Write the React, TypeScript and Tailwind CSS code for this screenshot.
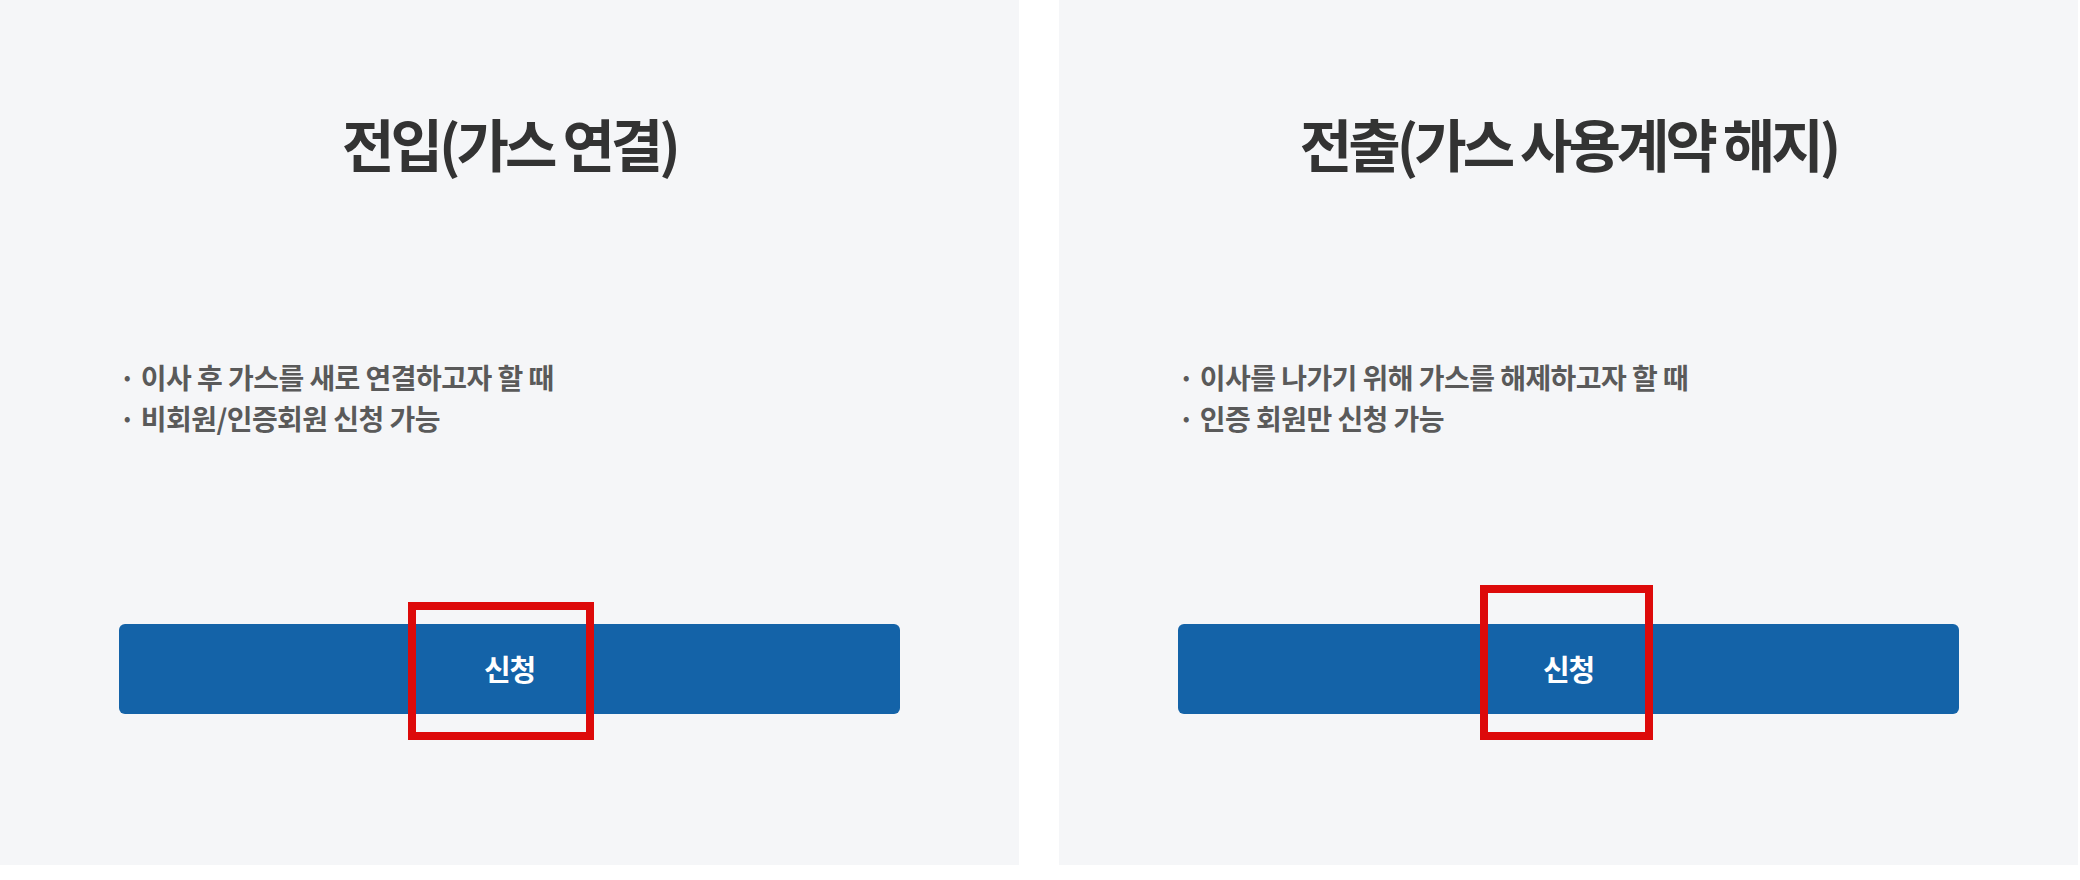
import React from "react";

interface Mark {
  left: number;
  top: number;
  width: number;
  height: number;
}

interface CardProps {
  title: string;
  lines: string[];
  mark: Mark;
}

function Card({ title, lines, mark }: CardProps) {
  return (
    <div className="w-[1019px] h-[865px] bg-[#f5f6f8] flex flex-col pt-[114px] px-[119px]">
      {/* Title */}
      <h2 className="text-center text-[57px] leading-[57px] font-bold tracking-[-0.07em] text-[#333333]">
        {title}
      </h2>

      {/* Description */}
      <ul className="mt-[186px] text-[28px] leading-[41px] font-bold tracking-[-0.02em] text-[#5a5a5a]">
        {lines.map((line) => (
          <li key={line}>· {line}</li>
        ))}
      </ul>

      {/* Apply button */}
      <div className="relative mt-[185px]">
        <button className="w-full h-[90px] rounded-[6px] bg-[#1463a8] text-white text-[29px] font-bold tracking-[-0.04em]">
          신청
        </button>
        <div
          className="absolute border-[8px] border-[#dd0a0a] pointer-events-none"
          style={{ left: mark.left, top: mark.top, width: mark.width, height: mark.height }}
        />
      </div>
    </div>
  );
}

export default function App() {
  return (
    <div
      className="w-[2080px] h-[880px] bg-white flex gap-[40px]"
      style={{ fontFamily: '"Noto Sans CJK KR", "Noto Sans", sans-serif' }}
    >
      <Card
        title="전입(가스 연결)"
        lines={["이사 후 가스를 새로 연결하고자 할 때", "비회원/인증회원 신청 가능"]}
        mark={{ left: 289, top: -22, width: 186, height: 138 }}
      />
      <Card
        title="전출(가스 사용계약 해지)"
        lines={["이사를 나가기 위해 가스를 해제하고자 할 때", "인증 회원만 신청 가능"]}
        mark={{ left: 302, top: -39, width: 173, height: 155 }}
      />
    </div>
  );
}
